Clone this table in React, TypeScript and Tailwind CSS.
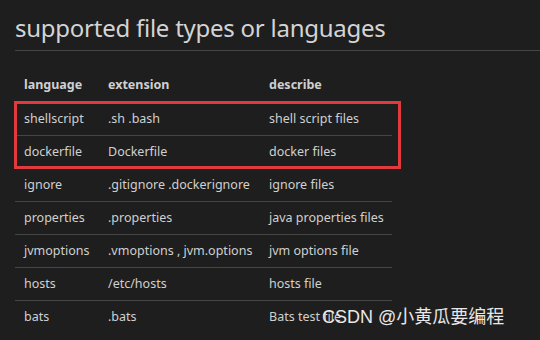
import React from "react";

const rows: [string, string, string][] = [
  ["shellscript", ".sh .bash", "shell script files"],
  ["dockerfile", "Dockerfile", "docker files"],
  ["ignore", ".gitignore .dockerignore", "ignore files"],
  ["properties", ".properties", "java properties files"],
  ["jvmoptions", ".vmoptions , jvm.options", "jvm options file"],
  ["hosts", "/etc/hosts", "hosts file"],
  ["bats", ".bats", "Bats test file"],
];

export default function App() {
  return (
    <div
      className="relative w-[540px] h-[340px] overflow-hidden bg-[#1e1e1e] text-[#d4d4d4]"
      style={{ fontFamily: '"Noto Sans", "Open Sans", sans-serif' }}
    >
      <div className="pl-[15px] pt-[12px]">
        <h1 className="text-[24px] leading-[32px] font-normal text-[#d4d4d4] tracking-[-0.25px]">
          supported file types or languages
        </h1>
        <div className="mt-[6px] h-px bg-[#454545]" />
        <table className="mt-[19px] w-[377px] table-fixed border-collapse text-[12.5px] text-[#d0d0d0]">
          <colgroup>
            <col className="w-[84px]" />
            <col className="w-[161px]" />
            <col className="w-[132px]" />
          </colgroup>
          <thead>
            <tr className="h-[32px] border-b border-[#454545]">
              <th className="pl-[9px] text-left font-bold">language</th>
              <th className="pl-[9px] text-left font-bold">extension</th>
              <th className="pl-[9px] text-left font-bold">describe</th>
            </tr>
          </thead>
          <tbody>
            {rows.map((r, i) => (
              <tr key={i} className={`h-[33px] ${i < rows.length - 1 ? "border-b border-[#454545]" : ""}`}>
                <td className="pl-[9px] pt-[1px] whitespace-nowrap">{r[0]}</td>
                <td className="pl-[9px] pt-[1px] whitespace-nowrap">{r[1]}</td>
                <td className="pl-[9px] pt-[1px] whitespace-nowrap">{r[2]}</td>
              </tr>
            ))}
          </tbody>
        </table>
      </div>
      <div className="absolute left-[14px] top-[101px] w-[387px] h-[68px] border-[3px] border-[#e0393e]" />
      <div
        className="absolute left-[322px] top-[305px] text-[18px] leading-[24px] text-[#e8e8e8] whitespace-nowrap"
        style={{ fontFamily: '"Liberation Sans", "Noto Sans CJK SC", sans-serif' }}
      >
        CSDN @小黄瓜要编程
      </div>
    </div>
  );
}
